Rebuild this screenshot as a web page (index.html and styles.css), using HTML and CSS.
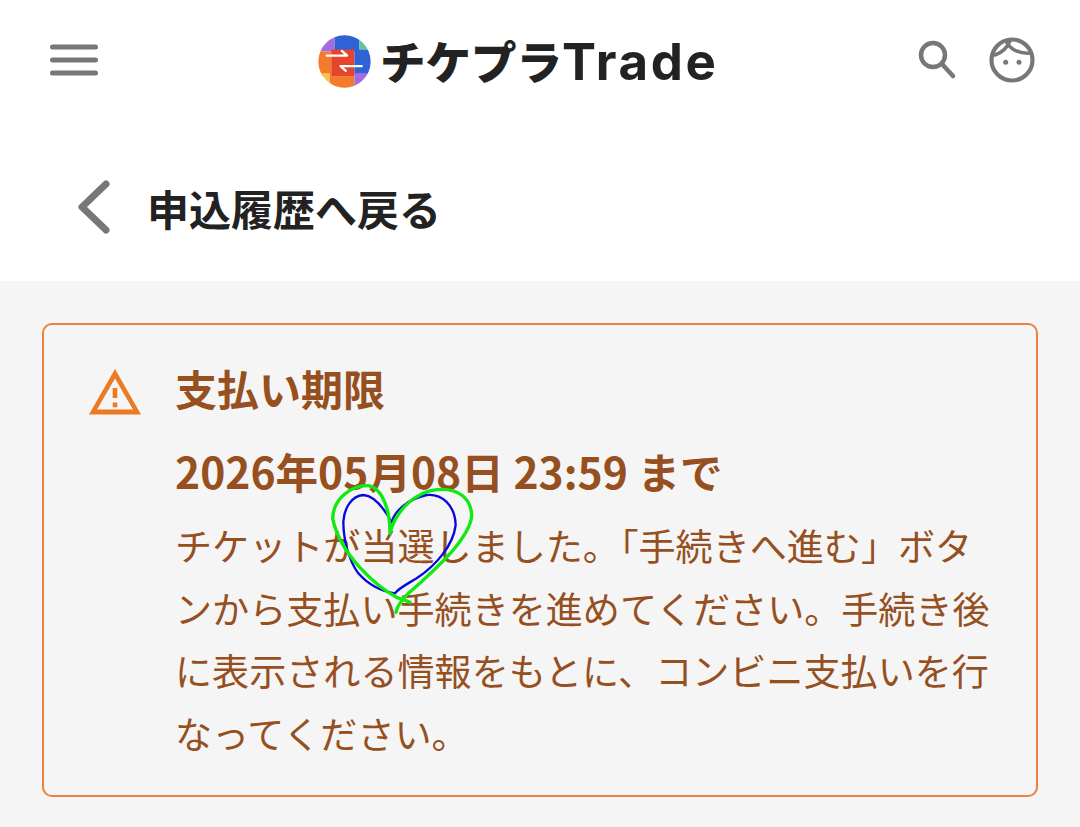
FILE: index.html
```html
<!DOCTYPE html>
<html lang="ja">
<head>
  <meta charset="UTF-8" />
  <meta name="viewport" content="width=device-width, initial-scale=1">
  <title>申込履歴へ戻る | チケプラTrade</title>
  <link rel="stylesheet" href="styles.css">
</head>
<body>
  <header class="site-header">
    <button class="icon-btn menu-btn" aria-label="メニュー">
      <svg viewBox="0 0 48 32" width="48" height="32">
        <path d="M2.500 3H45.500M2.500 16H45.500M2.500 29H45.500" class="icon-line" stroke-width="5"/>
      </svg>
    </button>

    <a class="logo" href="#">
      <svg class="logo-mark" viewBox="0 0 160 160" width="53" height="53">
        <defs>
          <clipPath id="logo-clip"><circle cx="80" cy="80" r="79"/></clipPath>
        </defs>
        <g clip-path="url(#logo-clip)">
          <rect width="50" height="50" fill="#a66be0"/>
          <rect x="50" width="75" height="48" fill="#2f62d4"/>
          <rect x="125" width="35" height="44" fill="#5cc6a0"/>
          <rect y="50" width="40" height="75" fill="#f47b2a"/>
          <rect x="40" y="44" width="70" height="80" fill="#e5452c"/>
          <rect x="110" y="44" width="50" height="75" fill="#2f62d4"/>
          <rect y="115" width="36" height="45" fill="#f8c350"/>
          <rect x="36" y="124" width="74" height="36" fill="#f47b2a"/>
          <rect x="110" y="115" width="50" height="45" fill="#a66be0"/>
        </g>
        <path d="M26 62H88L72 48M132 94H68L84 108" fill="none" stroke="#fff" stroke-width="7" stroke-linecap="round" stroke-linejoin="round"/>
      </svg>
      <span class="logo-text">チケプラ<span class="logo-latin">Trade</span></span>
    </a>

    <div class="header-actions">
      <svg viewBox="0 0 40 42" width="40" height="42">
        <circle cx="16" cy="16" r="12" class="icon-line" stroke-width="4.500"/>
        <path d="M25 25L36 37" class="icon-line" stroke-width="4.500"/>
      </svg>
      <svg viewBox="0 0 46 46" width="46" height="46">
        <circle cx="23" cy="23" r="20.500" class="icon-line" stroke-width="4.200"/>
        <path d="M6 18C12 16 18 11 21 4M18 6C22 12 30 17 42 16" class="icon-line" stroke-width="3.500"/>
        <circle cx="16.700" cy="25.300" r="2.500" fill="#777"/>
        <circle cx="30" cy="25.300" r="2.500" fill="#777"/>
      </svg>
    </div>
  </header>

  <a class="back-link" href="#">
    <svg viewBox="0 0 32 54" width="32" height="54">
      <path d="M28 4L4 27L28 50" class="icon-line" stroke-width="7"/>
    </svg>
    <span class="back-label">申込履歴へ戻る</span>
  </a>

  <main class="content">
    <section class="notice">
      <svg class="notice-icon" viewBox="0 0 52 46" width="52" height="46">
        <path fill-rule="evenodd" fill="#ec7a22" d="M26 0L52 45.500H0ZM26 9.500L8 40.500H44ZM23.700 19H28.300V29H23.700ZM23.700 33.500H28.300V38.200H23.700Z"/>
      </svg>
      <div class="notice-body">
        <h2 class="notice-title">支払い期限</h2>
        <p class="notice-date">2026年05月08日 23:59 まで</p>
        <p class="notice-text">チケットが当選しました。「手続きへ進む」ボタンから支払い手続きを進めてください。手続き後に表示される情報をもとに、コンビニ支払いを行なってください。</p>
      </div>
    </section>
  </main>

  <!-- hand drawn heart sits on top of the page -->
  <svg class="heart" viewBox="0 0 480 450" width="160" height="150">
    <path d="M225 355C190 350 150 335 115 295C85 255 70 190 70 140C72 100 95 62 130 60C165 62 195 105 215 142C225 105 265 72 320 60C365 55 405 90 407 150C400 210 350 270 290 310C260 328 235 340 225 355Z" fill="none" stroke="#0808e0" stroke-width="7" stroke-linejoin="round"/>
    <path d="M270 382C255 375 245 372 232 368C170 335 60 240 38 130C40 70 95 30 145 32C190 40 210 110 210 175C225 110 285 50 350 44C415 38 455 70 455 125C445 195 345 285 262 358C245 375 232 390 228 412" fill="none" stroke="#10ea10" stroke-width="10" stroke-linecap="round" stroke-linejoin="round"/>
  </svg>
</body>
</html>
```

FILE: styles.css
```css
* {
  box-sizing: border-box;
}

html, body {
  height: 100%;
}

body {
  margin: 0;
  display: flex;
  flex-direction: column;
  min-height: 827px;
  position: relative;
  overflow: hidden;
  font-family: "Noto Sans CJK JP", "Noto Sans", sans-serif;
  background: white;
  color: #222;
}

a {
  color: inherit;
  text-decoration: none;
}

.icon-line {
  fill: none;
  stroke: #777;
  stroke-linecap: round;
  stroke-linejoin: round;
}

/* ===== HEADER ===== */
.site-header {
  height: 120px;
  padding: 0 45px 0 50px;
  display: flex;
  align-items: center;
  justify-content: space-between;
  position: relative;
}

.icon-btn {
  background: none;
  border: none;
  padding: 0;
  display: flex;
}

.logo {
  position: absolute;
  left: 318px;
  top: 33px;
  display: flex;
  align-items: center;
  gap: 9px;
}

.logo-text {
  font-size: 45.500px;
  line-height: 54px;
  font-weight: 900;
  color: #222;
  white-space: nowrap;
}

.logo-latin {
  font-family: "Inter", sans-serif;
  font-weight: 700;
  font-size: 51px;
  letter-spacing: 2.600px;
}

.header-actions {
  display: flex;
  align-items: center;
  gap: 32px;
}

/* ===== BACK LINK ===== */
.back-link {
  height: 161px;
  padding: 13px 0 0 78px;
  display: flex;
  align-items: center;
  gap: 37px;
  font-size: 42px;
  font-weight: 700;
}

/* ===== NOTICE ===== */
.content {
  flex: 1;
  background: #f5f5f5;
  padding: 42px 42px 30px;
}

.notice {
  height: 474px;
  padding: 33px 40px 0 45px;
  display: flex;
  align-items: flex-start;
  gap: 34px;
  border: 2px solid #ee8040;
  border-radius: 10px;
  color: #964f1e;
}

.notice-icon {
  flex: none;
  margin-top: 11px;
}

.notice-title {
  margin: 0 0 23px;
  font-size: 42px;
  line-height: 60px;
  font-weight: 700;
}

.notice-date {
  margin: 0 0 13px;
  font-size: 42.600px;
  line-height: 60px;
  font-weight: 700;
  white-space: nowrap;
}

.notice-text {
  margin: 0;
  font-size: 37.100px;
  line-height: 62.700px;
}

.heart {
  position: absolute;
  left: 320px;
  top: 475px;
}
```
